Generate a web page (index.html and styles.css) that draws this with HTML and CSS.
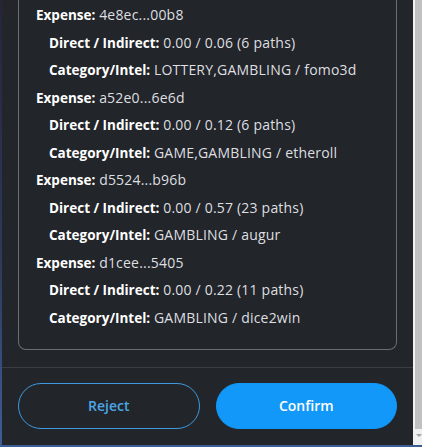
FILE: index.html
```html
<!DOCTYPE html>
<html>
<head>
<meta charset="utf-8">
<link rel="stylesheet" href="styles.css">
</head>
<body>
<div class="window">
  <div class="main">
    <div class="scroll">
      <div class="card">
        <div class="line"><b>Expense:</b> 4e8ec...00b8</div>
        <div class="line sub"><b>Direct / Indirect:</b> 0.00 / 0.06 (6 paths)</div>
        <div class="line sub"><b>Category/Intel:</b> LOTTERY,GAMBLING / fomo3d</div>
        <div class="line"><b>Expense:</b> a52e0...6e6d</div>
        <div class="line sub"><b>Direct / Indirect:</b> 0.00 / 0.12 (6 paths)</div>
        <div class="line sub"><b>Category/Intel:</b> GAME,GAMBLING / etheroll</div>
        <div class="line"><b>Expense:</b> d5524...b96b</div>
        <div class="line sub"><b>Direct / Indirect:</b> 0.00 / 0.57 (23 paths)</div>
        <div class="line sub"><b>Category/Intel:</b> GAMBLING / augur</div>
        <div class="line"><b>Expense:</b> d1cee...5405</div>
        <div class="line sub"><b>Direct / Indirect:</b> 0.00 / 0.22 (11 paths)</div>
        <div class="line sub"><b>Category/Intel:</b> GAMBLING / dice2win</div>
      </div>
    </div>
    <div class="footer">
      <button class="btn reject">Reject</button>
      <button class="btn confirm">Confirm</button>
    </div>
  </div>
  <div class="scrollbar">
    <div class="thumb"></div>
    <div class="arrow"></div>
  </div>
</div>
</body>
</html>
```
FILE: styles.css
```css
* { box-sizing: border-box; }
html, body { margin: 0; padding: 0; }
body {
  width: 422px;
  height: 447px;
  overflow: hidden;
  background: #222529;
  font-family: "Open Sans", "Noto Sans", sans-serif;
}
.window {
  display: flex;
  height: 447px;
  border-left: 2px solid;
  border-image: linear-gradient(#27243a, #2e3a5c 60%, #3d5e95) 1;
  border-bottom: 2px solid #33466b;
}
.main {
  flex: 1;
  display: flex;
  flex-direction: column;
  background: #222529;
}
.scroll {
  padding: 0 16px 17px 16px;
  border-bottom: 1px solid #3a3e44;
}
.card {
  border: 1px solid #6a6d72;
  border-top: none;
  border-radius: 0 0 8px 8px;
  padding: 1px 10px 17px 17px;
}
.line {
  height: 27.55px;
  line-height: 27.55px;
  font-size: 14px;
  letter-spacing: 0.2px;
  color: #dedfe0;
  white-space: nowrap;
}
.line b {
  color: #ffffff;
  font-weight: 700;
  font-size: 13.5px;
  letter-spacing: 0;
}
.line.sub {
  padding-left: 13px;
}
.footer {
  display: flex;
  gap: 16px;
  padding: 15px 16px 0 16px;
}
.btn {
  flex: 1;
  height: 46px;
  border-radius: 23px;
  font-family: "Open Sans", "Noto Sans", sans-serif;
  font-size: 14px;
  font-weight: 600;
  cursor: pointer;
}
.reject {
  background: transparent;
  border: 1px solid #3d9ae0;
  color: #4ca6e6;
}
.confirm {
  background: #1298f8;
  border: 1px solid #1298f8;
  color: #ffffff;
}
.scrollbar {
  width: 9px;
  background: #f1f1f1;
  display: flex;
  flex-direction: column;
  padding-left: 2px;
}
.thumb {
  height: 429px;
  background: #c1c1c1;
}
.arrow {
  margin: 5px auto 0 auto;
  width: 0;
  height: 0;
  border-left: 3px solid transparent;
  border-right: 3px solid transparent;
  border-top: 3px solid #a3a3a3;
}
```
